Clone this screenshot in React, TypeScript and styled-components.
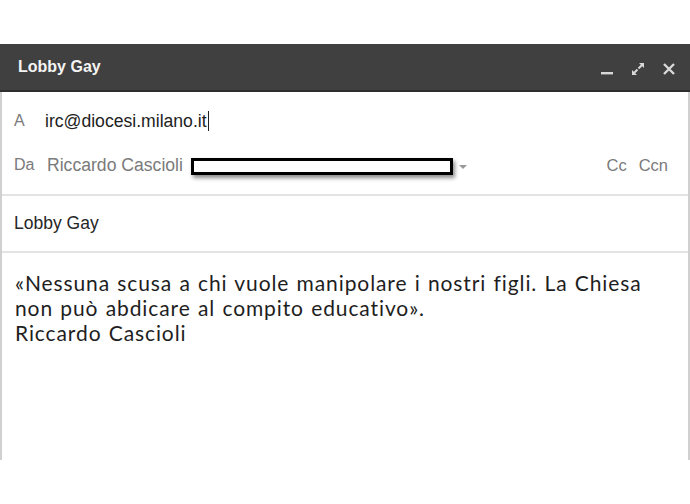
import React from "react";
import styled, { createGlobalStyle } from "styled-components";

const Global = createGlobalStyle`
  html, body { margin: 0; padding: 0; background: #ffffff; }
  body { font-family: "Liberation Sans", Arial, sans-serif; }
`;

const Page = styled.div`
  width: 690px;
  height: 504px;
  padding-top: 44px;
  box-sizing: border-box;
  background: #fff;
`;

const Window = styled.div`
  width: 690px;
  height: 416px;
  box-sizing: border-box;
  border-left: 2px solid #d0d0d0;
  border-right: 2px solid #d0d0d0;
  display: flex;
  flex-direction: column;
`;

const TitleBar = styled.div`
  height: 48px;
  margin: 0 -2px;
  background: #404040;
  border-bottom: 2px solid #2e2e2e;
  box-sizing: border-box;
  display: flex;
  align-items: center;
  padding: 4px 14px 0 18px;
`;

const Title = styled.div`
  color: #f4f4f4;
  font-weight: bold;
  font-size: 16px;
  flex: 1;
  margin-top: -4px;
`;

const Controls = styled.div`
  display: flex;
  align-items: center;
  gap: 16px;
  color: #d8d8d8;
`;

const Header = styled.div`
  padding: 3px 20px 0 12px;
  border-bottom: 2px solid #e3e3e3;
  height: 104px;
  box-sizing: border-box;
  display: flex;
  flex-direction: column;
`;

const Row = styled.div<{ $h: number }>`
  height: ${(p) => p.$h}px;
  display: flex;
  align-items: center;
`;

const Label = styled.span<{ $w: number }>`
  color: #7a7a7a;
  font-size: 16px;
  width: ${(p) => p.$w}px;
  flex: none;
`;

const Email = styled.span`
  color: #222;
  font-size: 17.6px;
  border-right: 1.5px solid #222;
  padding-right: 1px;
  line-height: 20px;
`;

const Name = styled.span`
  color: #7a7a7a;
  font-size: 17.6px;
`;

const Redact = styled.div`
  width: 256px;
  height: 11px;
  border: 3px solid #000;
  background: #fff;
  margin: 2px 0 0 8px;
  box-shadow: 2px 3px 4px rgba(0, 0, 0, 0.45);
`;

const Caret = styled.span`
  width: 0;
  height: 0;
  border-left: 4px solid transparent;
  border-right: 4px solid transparent;
  border-top: 4px solid #999;
  margin: 4px 0 0 6px;
`;

const Spacer = styled.div`
  flex: 1;
`;

const Links = styled.div`
  display: flex;
  gap: 12px;
  color: #7a7a7a;
  font-size: 16.5px;
`;

const Subject = styled.div`
  height: 57px;
  border-bottom: 2px solid #e3e3e3;
  box-sizing: border-box;
  display: flex;
  align-items: center;
  padding: 0 12px 0 12px;
  color: #262626;
  font-size: 17.5px;
`;

const Body = styled.div`
  padding: 17px 12px 0 13px;
  font-family: Lato, "Open Sans", sans-serif;
  font-size: 21px;
  letter-spacing: 0.9px;
  word-spacing: 1px;
  line-height: 25px;
  color: #1e1e1e;
  font-variant-ligatures: none;
`;

const Minimize = () => (
  <svg width="14" height="14" viewBox="0 0 14 14">
    <rect x="1" y="10" width="12" height="2.4" fill="#d8d8d8" />
  </svg>
);
const Expand = () => (
  <svg width="16" height="16" viewBox="0 0 16 16" fill="#d8d8d8">
    <path d="M9 2h5v5l-1.8-1.8-3 3-1.4-1.4 3-3z" />
    <path d="M7 14H2V9l1.8 1.8 3-3 1.4 1.4-3 3z" />
  </svg>
);
const Close = () => (
  <svg width="14" height="14" viewBox="0 0 14 14">
    <path d="M2 2L12 12M12 2L2 12" stroke="#d8d8d8" strokeWidth="2.4" />
  </svg>
);

export default function App() {
  return (
    <Page>
      <Global />
      <Window>
        <TitleBar>
          <Title>Lobby Gay</Title>
          <Controls>
            <Minimize />
            <Expand />
            <Close />
          </Controls>
        </TitleBar>
        <Header>
          <Row $h={52}>
            <Label $w={31}>A</Label>
            <Email>irc@diocesi.milano.it</Email>
          </Row>
          <Row $h={36}>
            <Label $w={33}>Da</Label>
            <Name>Riccardo Cascioli</Name>
            <Redact />
            <Caret />
            <Spacer />
            <Links>
              <span>Cc</span>
              <span>Ccn</span>
            </Links>
          </Row>
        </Header>
        <Subject>Lobby Gay</Subject>
        <Body>
          «Nessuna scusa a chi vuole manipolare i nostri figli. La Chiesa
          <br />
          non può abdicare al compito educativo».
          <br />
          Riccardo Cascioli
        </Body>
      </Window>
    </Page>
  );
}
